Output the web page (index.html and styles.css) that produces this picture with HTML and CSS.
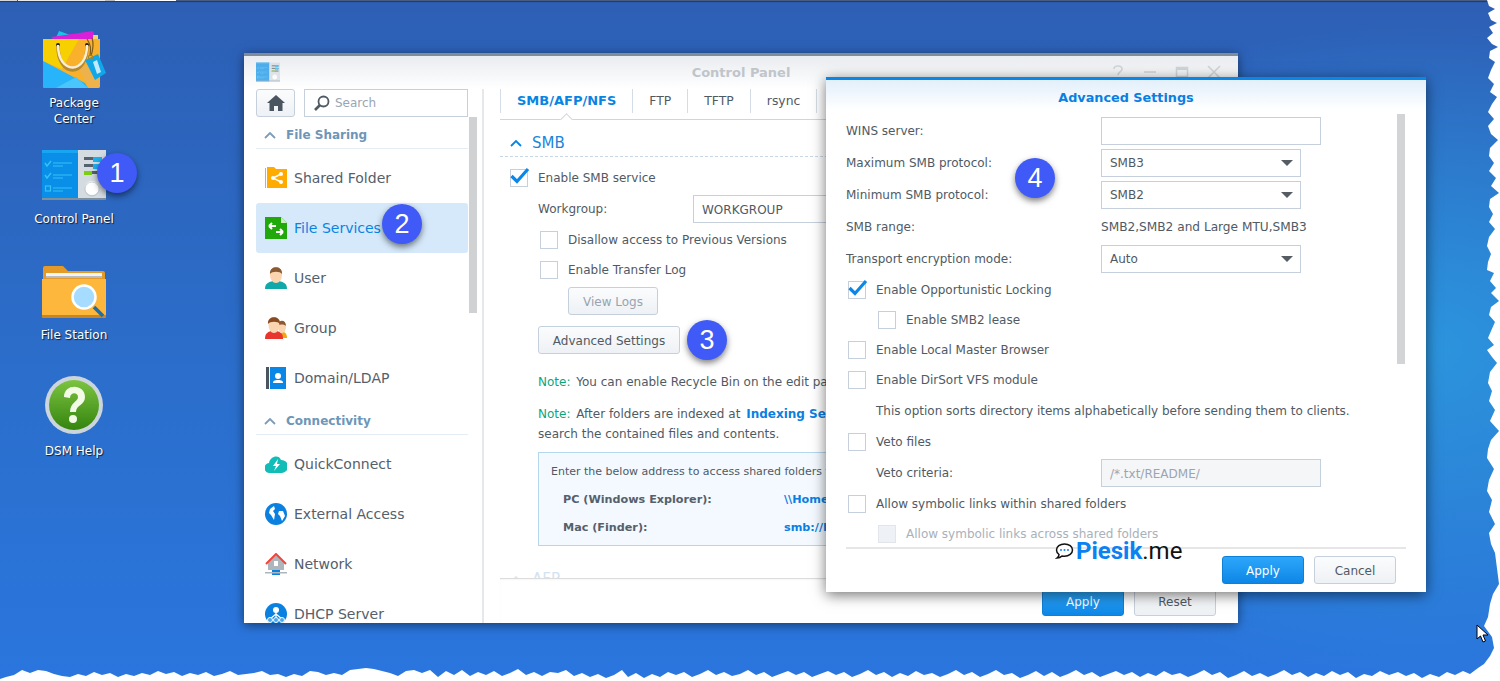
FILE: index.html
```html
<!DOCTYPE html>
<html lang="en">
<head>
<meta charset="utf-8">
<title>Control Panel - Advanced Settings</title>
<link rel="stylesheet" href="styles.css">
</head>
<body>
<svg class="defs" width="0" height="0" aria-hidden="true">
  <symbol id="cp-icon" viewBox="0 0 64 50">
    <rect width="36" height="50" fill="#0a8fe8"/>
    <rect width="36" height="3" fill="#19a5f2"/>
    <rect x="36" width="28" height="50" fill="#d4dbe1"/>
    <rect y="48" width="64" height="2" fill="#7f8f9c"/>
    <path d="M3 13l2 3 4-5M3 25l2 3 4-5" fill="none" stroke="#35c2f7" stroke-width="1.4"/>
    <rect x="3.500" y="36" width="5" height="5" fill="none" stroke="#35c2f7" stroke-width="1.2"/>
    <path d="M11 13h19M11 16h10M11 25h19M11 28h10M11 38h19M11 41h10" stroke="#35c2f7" stroke-width="1.1"/>
    <rect x="42" y="7" width="18" height="3" fill="#56636e"/><rect x="51" y="7" width="9" height="5" fill="#1db0ef"/>
    <rect x="42" y="14" width="18" height="3" fill="#56636e"/><rect x="51" y="14" width="9" height="5" fill="#1db0ef"/>
    <rect x="42" y="21" width="18" height="3" fill="#56636e"/><rect x="42" y="21" width="8" height="4" fill="#7ccf10"/>
    <circle cx="50" cy="38" r="7" fill="#fff"/><circle cx="50" cy="39" r="7" fill="none" stroke="#aab4bd" stroke-width=".6"/>
  </symbol>
  <symbol id="check" viewBox="0 0 20 18">
    <path d="M1.500 9l5.500 5.500L18 2" fill="none" stroke="#0c87e8" stroke-width="3.200"/>
  </symbol>
  <symbol id="chev" viewBox="0 0 12 8">
    <path d="M1 7l5-5 5 5" fill="none" stroke="currentColor" stroke-width="1.800"/>
  </symbol>
</svg>

<main class="desktop">
  <div class="taskbar-edge"></div>

  <div class="desk-icon pos-pkg">
    <svg width="64" height="60" viewBox="0 0 64 60">
      <path d="M13 11l4-9 14 5-14 6z" fill="#18c5e8"/>
      <path d="M9 8l42-6 3 9H12z" fill="#d91fd8"/>
      <rect x="51" y="6" width="5" height="6" fill="#f4d56a"/>
      <path d="M1 10h57v47a2 2 0 0 1-2 2H3a2 2 0 0 1-2-2z" fill="#f9b02a"/>
      <path d="M1 10h36L20 40 1 32z" fill="#f6d000"/>
      <path d="M1 32l42 22 3 5H3a2 2 0 0 1-2-2z" fill="#27b4fb"/>
      <path d="M14 59l20-11 12 11z" fill="#49c6fb"/>
      <path d="M34 36l24 0v21a2 2 0 0 1-2 2h-8z" fill="#e9b35a" opacity=".75"/>
      <circle cx="16" cy="16" r="2" fill="#222"/><circle cx="45" cy="16" r="2" fill="#222"/>
      <path d="M16 17c0 32 29 32 29 0" fill="none" stroke="#b5892f" stroke-width="3.500"/>
      <path d="M16 16c0 30 29 30 29 0" fill="none" stroke="#fbeed3" stroke-width="2.500"/>
      <path d="M45 10c4 6 4 10 3 17" fill="none" stroke="#7b5a1c" stroke-width="1.200"/>
      <path d="M50 9c2 6 1 12-1 18" fill="none" stroke="#7b5a1c" stroke-width="1.200"/>
      <path d="M43 31l13-6 8 19-11 7z" fill="#10a7e8"/>
      <path d="M51 33l4-2 4 12-4 2z" fill="#bfeaff"/>
      <circle cx="48.500" cy="28" r="2" fill="none" stroke="#a8862a" stroke-width="1.200"/>
    </svg>
    <span class="desk-label">Package<br>Center</span>
  </div>

  <div class="desk-icon pos-cp">
    <svg class="cp-big" width="64" height="50"><use href="#cp-icon"/></svg>
    <span class="desk-label">Control Panel</span>
  </div>

  <div class="desk-icon pos-fs">
    <svg width="64" height="54" viewBox="0 0 64 54">
      <path d="M1 52V3a2 2 0 0 1 2-2h18l5 5h35a2 2 0 0 1 2 2v44z" fill="#e39a26"/>
      <rect x="4" y="8" width="56" height="4" fill="#f4f4f4"/>
      <rect x="4" y="11" width="56" height="2" fill="#b9bcc0"/>
      <path d="M0 14h64v37a2 2 0 0 1-2 2H2a2 2 0 0 1-2-2z" fill="#fdb73d"/>
      <path d="M0 50h64v1a2 2 0 0 1-2 2H2a2 2 0 0 1-2-2z" fill="#c98620"/>
      <path d="M52 42l9 9" stroke="#1f6ea8" stroke-width="3.500"/>
      <circle cx="42" cy="32" r="11.500" fill="#a5dcff" stroke="#fff" stroke-width="2.500"/>
    </svg>
    <span class="desk-label">File Station</span>
  </div>

  <div class="desk-icon pos-help">
    <svg width="60" height="60" viewBox="0 0 60 60">
      <defs><linearGradient id="helpg" x1="0" y1="0" x2="0" y2="1"><stop offset="0" stop-color="#7cc441"/><stop offset="1" stop-color="#35840f"/></linearGradient></defs>
      <circle cx="30" cy="30" r="29" fill="#cdd5dc"/>
      <circle cx="30" cy="30" r="25" fill="url(#helpg)"/>
      <path d="M20 22c0-14 21-13 21 0 0 8-9 8-9 15h-6c0-10 8-10 8-15 0-5-8-5-8 1z" fill="#f2fbe6"/>
      <circle cx="29" cy="44" r="4" fill="#f2fbe6"/>
    </svg>
    <span class="desk-label">DSM Help</span>
  </div>

  <section class="window">
    <header class="win-head">
      <svg class="win-logo" width="24" height="20"><use href="#cp-icon"/></svg>
      <h1 class="win-title">Control Panel</h1>
      <div class="win-controls">
        <svg width="14" height="14" viewBox="0 0 14 14"><path d="M3 4c0-4 8-4 8 0 0 3-4 3-4 6M7 12v2" fill="none" stroke="#d0d5da" stroke-width="1.600"/></svg>
        <svg width="14" height="14" viewBox="0 0 14 14"><path d="M1 7h12" stroke="#d0d5da" stroke-width="1.600"/></svg>
        <svg width="14" height="14" viewBox="0 0 14 14"><rect x="1.500" y="2.500" width="11" height="9" fill="none" stroke="#d0d5da" stroke-width="1.500"/><path d="M1 4h12" stroke="#d0d5da" stroke-width="2"/></svg>
        <svg width="14" height="14" viewBox="0 0 14 14"><path d="M1 1l12 12M13 1L1 13" stroke="#d0d5da" stroke-width="1.600"/></svg>
      </div>
    </header>
    <div class="win-body">
      <aside class="sidebar">
        <div class="side-tools">
          <button class="btn home-btn" aria-label="Home">
            <svg width="18" height="16" viewBox="0 0 18 16"><path d="M9 0L0 8h2.500v8H7v-5h4v5h4.500V8H18z" fill="#4a5560"/></svg>
          </button>
          <div class="search">
            <svg width="17" height="17" viewBox="0 0 17 17"><circle cx="10.500" cy="6.500" r="5" fill="none" stroke="#4f5a64" stroke-width="1.800"/><path d="M7 10l-5 5" stroke="#4f5a64" stroke-width="2.600"/></svg>
            <span>Search</span>
          </div>
        </div>
        <nav class="side-nav">
          <div class="side-group"><svg class="side-chev" width="12" height="8"><use href="#chev"/></svg>File Sharing</div>
          <a class="side-item">
            <svg width="22" height="22" viewBox="0 0 22 22"><path d="M0 1h1v20H0zM2 0h7l2 2h11v19H2z" fill="#ffab00"/><path d="M16 7l-8 4 8 4" fill="none" stroke="#fff" stroke-width="1.500"/><circle cx="16" cy="7" r="2" fill="#fff"/><circle cx="8" cy="11" r="2" fill="#fff"/><circle cx="16" cy="15" r="2" fill="#fff"/></svg>
            Shared Folder
          </a>
          <a class="side-item active">
            <svg width="22" height="22" viewBox="0 0 22 22"><path d="M0 0h16l6 6v16H0z" fill="#21a80b"/><path d="M16 0l6 6h-6z" fill="#cdeec4"/><path d="M4 9h7M4 9l3-3M4 9l3 3M18 15h-7M18 15l-3-3M18 15l-3 3" fill="none" stroke="#fff" stroke-width="2"/></svg>
            File Services
          </a>
          <a class="side-item">
            <svg width="22" height="22" viewBox="0 0 22 22"><path d="M0 22c0-6 4-7 8-8h6c4 1 8 2 8 8z" fill="#10a8a8"/><ellipse cx="11" cy="8" rx="6" ry="8" fill="#fbd5b0"/><path d="M5 7c-1-9 13-9 12 0-2-3-10-3-12 0z" fill="#8a5a33"/></svg>
            User
          </a>
          <a class="side-item">
            <svg width="22" height="22" viewBox="0 0 22 22"><path d="M15 21c0-4 1-6 3-6s4 2 4 6z" fill="#f4a60c"/><ellipse cx="17" cy="10" rx="4" ry="6" fill="#fbd5b0"/><path d="M13 9c0-7 8-7 8 0-2-2-6-2-8 0z" fill="#8a5a33"/><path d="M0 22c0-6 3-7 6-8h6c3 1 6 2 6 8z" fill="#e8362e"/><ellipse cx="9" cy="8" rx="5.500" ry="8" fill="#fbd5b0"/><path d="M3 7c-1-9 13-9 12 0-2-3-10-3-12 0z" fill="#8a4a22"/></svg>
            Group
          </a>
          <a class="side-item">
            <svg width="22" height="22" viewBox="0 0 22 22"><rect x="1" width="3" height="22" fill="#4a5560"/><rect x="5" width="16" height="22" fill="#0a86e6"/><circle cx="13" cy="9" r="3" fill="#fff"/><path d="M8 16c0-3 3-3 5-3s5 0 5 3z" fill="#fff"/></svg>
            Domain/LDAP
          </a>
          <div class="side-group"><svg class="side-chev" width="12" height="8"><use href="#chev"/></svg>Connectivity</div>
          <a class="side-item">
            <svg width="22" height="22" viewBox="0 0 22 22"><path d="M5 20a5 5 0 0 1-1-10C5 3 14 1 16 7a6.500 6.500 0 0 1 1 13z" fill="#12bdb8"/><path d="M13 6l-5 7h3l-2 5 6-7h-3z" fill="#fff"/></svg>
            QuickConnect
          </a>
          <a class="side-item">
            <svg width="22" height="22" viewBox="0 0 22 22"><circle cx="11" cy="11" r="11" fill="#0a80e0"/><path d="M5 6l4-3 1 3-2 2 2 3-1 6-3-5-2-2zM14 8l4 0 2 5-3 5-2-5-2-2z" fill="#fff"/></svg>
            External Access
          </a>
          <a class="side-item">
            <svg width="22" height="22" viewBox="0 0 22 22"><path d="M11 2L3 10v7h16v-7z" fill="#aeb6bd"/><path d="M1 11l10-10 10 10" fill="none" stroke="#f04438" stroke-width="2"/><rect x="9" y="8" width="4" height="5" fill="#fff"/><rect x="7" y="17" width="8" height="5" fill="#0a80e0"/><rect y="19" width="22" height="1.500" fill="#aeb6bd"/></svg>
            Network
          </a>
          <a class="side-item">
            <svg width="22" height="22" viewBox="0 0 22 22"><circle cx="11" cy="11" r="11" fill="#0a80e0"/><circle cx="11" cy="7" r="3" fill="#fff"/><path d="M11 9v6M11 11l-6 5M11 11l6 5" stroke="#fff" stroke-width="1.200"/><circle cx="5" cy="17" r="2.500" fill="#4aa7ee" stroke="#fff"/><circle cx="11" cy="17" r="2.500" fill="#4aa7ee" stroke="#fff"/><circle cx="17" cy="17" r="2.500" fill="#4aa7ee" stroke="#fff"/></svg>
            DHCP Server
          </a>
        </nav>
        <div class="side-scroll"></div>
      </aside>

      <div class="main-pane">
        <div class="tabs">
          <span class="tab active">SMB/AFP/NFS</span>
          <span class="tab">FTP</span>
          <span class="tab">TFTP</span>
          <span class="tab">rsync</span>
          <span class="tab">Advanced</span>
        </div>
        <div class="main-scroll">
          <h2 class="sec-head"><svg class="sec-chev" width="12" height="8"><use href="#chev"/></svg>SMB</h2>
          <div class="chk-row main-l0"><span class="chk"><svg class="tick" width="20" height="18"><use href="#check"/></svg></span>Enable SMB service</div>
          <div class="field-row"><label class="field-label">Workgroup:</label><div class="input wide">WORKGROUP</div></div>
          <div class="chk-row main-l1"><span class="chk"></span>Disallow access to Previous Versions</div>
          <div class="chk-row main-l1"><span class="chk"></span>Enable Transfer Log</div>
          <button class="btn btn-logs">View Logs</button>
          <button class="btn btn-adv">Advanced Settings</button>
          <p class="note note-1"><span class="note-tag">Note:</span> You can enable Recycle Bin on the edit page</p>
          <p class="note note-2"><span class="note-tag">Note:</span> After folders are indexed at <b class="link">Indexing Service</b><br>search the contained files and contents.</p>
          <div class="info-box">
            <p class="info-lead">Enter the below address to access shared folders from</p>
            <div class="info-row"><b class="info-key">PC (Windows Explorer):</b><b class="link">\\HomeNAS</b></div>
            <div class="info-row"><b class="info-key">Mac (Finder):</b><b class="link">smb://HomeNAS</b></div>
          </div>
          <h2 class="sec-head sec-faded"><svg class="sec-chev" width="12" height="8"><use href="#chev"/></svg>AFP</h2>
        </div>
        <footer class="main-foot">
          <button class="btn btn-primary">Apply</button>
          <button class="btn">Reset</button>
        </footer>
      </div>
    </div>
  </section>

  <section class="dialog">
    <header class="dlg-head">Advanced Settings</header>
    <div class="dlg-body">
      <div class="dlg-row"><label class="dlg-label">WINS server:</label><div class="input w220"></div></div>
      <div class="dlg-row"><label class="dlg-label">Maximum SMB protocol:</label><div class="input select w200">SMB3<i class="caret"></i></div></div>
      <div class="dlg-row"><label class="dlg-label">Minimum SMB protocol:</label><div class="input select w200">SMB2<i class="caret"></i></div></div>
      <div class="dlg-row"><label class="dlg-label">SMB range:</label><span class="range">SMB2,SMB2 and Large MTU,SMB3</span></div>
      <div class="dlg-row"><label class="dlg-label">Transport encryption mode:</label><div class="input select w200">Auto<i class="caret"></i></div></div>
      <div class="chk-row dlg-l0 first-check"><span class="chk"><svg class="tick" width="20" height="18"><use href="#check"/></svg></span>Enable Opportunistic Locking</div>
      <div class="chk-row dlg-l1"><span class="chk"></span>Enable SMB2 lease</div>
      <div class="chk-row dlg-l0"><span class="chk"></span>Enable Local Master Browser</div>
      <div class="chk-row dlg-l0"><span class="chk"></span>Enable DirSort VFS module</div>
      <div class="dlg-text">This option sorts directory items alphabetically before sending them to clients.</div>
      <div class="chk-row dlg-l0 tall"><span class="chk"></span>Veto files</div>
      <div class="dlg-row veto"><label class="dlg-label veto-label">Veto criteria:</label><div class="input w220 disabled">/*.txt/README/</div></div>
      <div class="chk-row dlg-l0"><span class="chk"></span>Allow symbolic links within shared folders</div>
      <div class="chk-row dlg-l1 off"><span class="chk"></span>Allow symbolic links across shared folders</div>
      <div class="dlg-scroll"></div>
    </div>
    <footer class="dlg-foot">
      <button class="btn btn-primary">Apply</button>
      <button class="btn">Cancel</button>
    </footer>
  </section>

  <div class="badge b1">1</div>
  <div class="badge b2">2</div>
  <div class="badge b3">3</div>
  <div class="badge b4">4</div>

  <div class="mark">
    <svg width="19" height="18" viewBox="0 0 19 18"><path d="M9.500 2C5 2 1.500 4.500 1.500 8c0 2 1 3.500 2.500 4.500 0 1.500-.5 2.500-2 3.500 2.500 0 4-1 5-2 .8.200 1.700.200 2.500.200 4.500 0 8-2.700 8-6.200S14 2 9.500 2z" fill="#fff" stroke="#111" stroke-width="1.500"/><circle cx="6" cy="8" r="1" fill="#1a7ff0"/><circle cx="9.500" cy="8" r="1" fill="#1a7ff0"/><circle cx="13" cy="8" r="1" fill="#1a7ff0"/></svg>
    <span class="mark-name">Piesik</span><span class="mark-tld">.me</span>
  </div>

  <svg class="torn" width="1500" height="681" viewBox="0 0 1500 681" aria-hidden="true">
    <path fill="#fff" d="M1487 0L1489 6L1495 9L1488 13L1491 20L1497 23L1489 27L1493 33L1487 38L1492 44L1498 47L1490 51L1489 58L1495 62L1491 70L1488 78L1494 84L1490 92L1497 97L1492 104L1488 112L1494 119L1488 126L1491 134L1498 140L1490 148L1489 156L1494 163L1489 171L1496 178L1491 186L1499 193L1490 199L1489 207L1493 214L1489 222L1495 229L1489 237L1487 246L1491 254L1488 262L1487 270L1494 273L1490 281L1496 288L1491 293L1499 301L1491 307L1489 315L1495 322L1491 331L1488 338L1494 345L1487 350L1492 357L1497 363L1490 372L1488 383L1492 391L1489 401L1495 410L1490 421L1499 431L1491 440L1488 449L1487 458L1494 469L1489 480L1487 491L1492 500L1489 512L1495 524L1489 533L1491 544L1495 553L1499 584L1493 594L1490 604L1488 617L1484 626L1492 637L1494 648L1490 656L1484 664L1478 668L1470 674L1463 671L1455 675L1447 672L1439 677L1430 674L1422 678L1414 673L1406 676L1398 672L1389 675L1380 671L1372 676L1364 674L1356 678L1348 672L1340 675L1332 671L1324 676L1316 673L1308 677L1300 672L1292 675L1284 670L1276 674L1268 677L1260 673L1252 676L1244 671L1236 675L1228 678L1220 672L1212 675L1204 670L1196 674L1188 677L1180 673L1172 675L1164 671L1156 676L1148 673L1140 677L1132 672L1124 675L1116 671L1108 674L1100 677L1092 672L1084 675L1076 670L1068 674L1060 677L1052 672L1044 676L1036 671L1028 675L1020 678L1012 673L1004 675L996 670L988 674L980 677L972 672L964 675L956 670L948 674L940 677L932 673L924 675L916 671L908 676L900 673L892 677L884 672L876 675L868 670L860 674L852 677L844 672L836 675L828 671L820 674L812 677L804 672L796 675L788 671L780 674L772 677L764 672L756 675L748 670L740 674L732 676L724 672L716 675L708 670L700 674L692 677L684 672L676 675L668 672L660 677L652 674L644 678L636 673L628 677L622 670L614 675L606 678L598 674L590 677L582 673L574 676L566 670L558 673L550 672L542 676L534 672L526 675L518 669L510 673L502 676L494 671L486 675L478 672L470 676L462 670L454 675L446 671L438 677L430 670L422 673L414 670L406 671L398 676L390 673L382 671L374 669L366 668L358 669L350 670L342 675L334 673L326 675L318 672L310 671L302 676L294 674L286 677L278 674L270 675L262 671L254 673L246 674L238 675L230 671L222 674L214 676L206 672L198 675L190 673L182 676L174 672L166 674L158 671L150 675L142 673L134 676L126 674L118 677L110 673L102 675L94 672L86 676L78 674L70 677L62 676L54 674L46 671L38 670L30 673L22 670L14 675L6 677L0 679V681H1500V0Z"/>
  </svg>

  <svg class="cursor" width="13" height="19" viewBox="0 0 13 19"><path d="M1 1v14l3.500-3 2.500 6 2.500-1-2.500-6H12z" fill="#fff" stroke="#000" stroke-width="1"/></svg>
</main>
</body>
</html>
```
FILE: styles.css
```css
* { box-sizing: border-box; }
html, body { margin: 0; height: 100%; }
body { overflow: hidden; background: #fff; font-family: "DejaVu Sans", Verdana, sans-serif; font-size: 12px; color: #505a64; }
.defs { position: absolute; }

.desktop {
  position: relative;
  width: 1500px;
  height: 681px;
  overflow: hidden;
  background:
    radial-gradient(ellipse 480px 330px at 1420px 350px, #2c95de 0%, rgba(44,149,222,0) 100%),
    linear-gradient(180deg, #2d5fb5 0%, #2b6ecb 55%, #2a76de 100%);
}
.taskbar-edge {
  position: absolute; left: 0; right: 0; top: 0; height: 1px;
  background: linear-gradient(90deg, #d6d6d6 0 17px, #555 17px 18px, #e8e8e8 18px 105px, #bbb 105px 115px, #fff 115px 176px, #4a5d80 176px);
  box-shadow: 0 1px 1px rgba(20,40,90,.8);
}

.desk-icon { position: absolute; left: 24px; width: 100px; display: flex; flex-direction: column; align-items: center; }
.desk-label { margin-top: 6px; color: #fff; font-size: 12px; line-height: 16px; text-align: center; text-shadow: 1px 1px 1px rgba(0,0,0,.75); white-space: nowrap; }
.pos-pkg { top: 29px; }
.pos-cp { top: 150px; }
.pos-cp .desk-label { margin-top: 11px; }
.pos-fs { top: 265px; }
.pos-fs .desk-label { margin-top: 8px; }
.pos-help { top: 375px; }
.pos-help .desk-label { margin-top: 8px; }

.btn {
  display: inline-flex; align-items: center; justify-content: center;
  width: 82px; height: 28px; padding: 0; margin: 0;
  border: 1px solid #c6d0dc; border-radius: 3px;
  background: linear-gradient(180deg, #fbfcfd, #eef1f5);
  color: #505a64; font: 12px "DejaVu Sans", Verdana, sans-serif;
}
.btn-primary { border-color: #0d80d8; background: linear-gradient(180deg, #2ca7fb, #0e86e6); color: #fff; }

.window {
  position: absolute; left: 244px; top: 53px; width: 994px; height: 570px;
  display: flex; flex-direction: column;
  background: #fff; border-top: 3px solid #7f8c9a; overflow: hidden;
  box-shadow: 0 2px 10px rgba(0,0,0,.5);
}
.win-head {
  position: relative; flex: none; height: 33px; display: flex; align-items: center; justify-content: center;
  background: linear-gradient(180deg, #e9ecf0, #fff);
}
.win-logo { position: absolute; left: 12px; top: 6px; opacity: .7; }
.win-title { margin: 0; font-size: 13px; font-weight: bold; color: #bfc5cb; }
.win-controls { position: absolute; right: 17px; top: 9px; display: flex; gap: 18px; }
.win-body { flex: 1; min-height: 0; display: flex; }

.sidebar { position: relative; flex: none; width: 240px; padding-left: 12px; border-right: 2px solid #e6e8ea; display: flex; flex-direction: column; }
.side-tools { flex: none; display: flex; gap: 9px; height: 28px; width: 212px; }
.home-btn { flex: none; width: 39px; height: 28px; }
.search { flex: 1; display: flex; align-items: center; gap: 5px; padding-left: 8px; height: 28px; border: 1px solid #c6d0dc; color: #9aa5b2; font-size: 12px; }
.side-nav { flex: 1; width: 212px; overflow: hidden; }
.side-group {
  display: flex; align-items: center; gap: 10px; height: 32px; padding: 5px 0 0 8px; margin-bottom: 4px;
  border-bottom: 1px solid #e5edf4; color: #6d96b8; font-weight: bold; font-size: 12px;
}
.side-chev { color: #7c9cba; }
.side-item { display: flex; align-items: center; gap: 7px; height: 50px; padding-left: 9px; border-radius: 3px; font-size: 14px; color: #55606b; }
.side-item.active { background: #d5e9fb; color: #0a84e2; }
.side-scroll { position: absolute; left: 225px; top: 28px; width: 8px; height: 196px; background: #d0d1d2; }

.main-pane { flex: 1; min-width: 0; display: flex; flex-direction: column; padding-left: 16px; }
.tabs { flex: none; display: flex; height: 31px; border-bottom: 1px solid #cfd5db; position: relative; }
.tab { display: flex; align-items: center; height: 24px; padding: 0 16px 2px; border-right: 1px solid #d4dde6; font-size: 12.400px; color: #505a64; white-space: nowrap; }
.tab.active { color: #0a84e2; font-weight: bold; border-left: 1px solid #d4dde6; position: relative; font-size: 13px; }
.tab.active::after {
  content: ""; position: absolute; left: 61px; top: 26px; width: 8px; height: 8px;
  background: #fff; border-left: 1px solid #cfd5db; border-top: 1px solid #cfd5db;
  transform: rotate(45deg);
}
.main-scroll { flex: 1; min-height: 0; overflow: hidden; }
.sec-head {
  display: flex; align-items: center; gap: 10px; height: 37px; margin: 0; padding: 10px 0 0 10px;
  border-bottom: 1px dashed #c8d7e6; color: #1a86dc; font-size: 15px; font-weight: normal;
}
.sec-chev { color: #0a84e2; }
.sec-faded { margin-top: 24px; height: 20px; padding-top: 0; border: 0; color: #d4e3f2; align-items: flex-start; }
.sec-faded .sec-chev { color: #dce8f4; margin-top: 5px; }

.chk-row { display: flex; align-items: center; height: 30px; white-space: nowrap; }
.chk { position: relative; flex: none; width: 18px; height: 18px; margin-right: 10px; border: 1px solid #c6d0dc; background: #fff; }
.tick { position: absolute; left: -1px; top: -3px; }
.main-l0 { margin-top: 6px; padding-left: 10px; }
.main-l1 { padding-left: 40px; }
.field-row { display: flex; align-items: center; height: 32px; padding-left: 38px; }
.field-label { width: 155px; flex: none; }
.input { display: flex; align-items: center; height: 28px; padding: 1px 0 0 8px; border: 1px solid #c6d0dc; background: #fff; white-space: nowrap; flex: none; }
.wide { width: 400px; }
.btn-logs { display: flex; width: 90px; margin: 2px 0 0 68px; padding-top: 2px; color: #98a3b0; }
.btn-adv { display: flex; width: 142px; margin: 11px 0 0 38px; padding-top: 2px; }
.note { margin: 0 0 0 38px; line-height: 20px; white-space: nowrap; }
.note-1 { margin-top: 18px; }
.note-2 { margin-top: 12px; }
.note-tag { color: #0aa77e; margin-right: 2px; }
.link { color: #0a7fe2; }
.note .link { margin-left: 2px; }
.info-box { width: 420px; height: 94px; margin: 8px 0 0 38px; padding: 12px 0 0 12px; border: 1px solid #b5d6ec; background: #f3f9fe; font-size: 11px; white-space: nowrap; overflow: hidden; }
.info-lead { margin: 0 0 15px; line-height: 13px; }
.info-row { display: flex; height: 28px; padding-left: 12px; font-size: 11.200px; line-height: 13px; }
.info-key { width: 221px; flex: none; color: #55606b; }

.main-foot { flex: none; height: 45px; display: flex; justify-content: flex-end; gap: 10px; padding: 11px 22px 0 0; border-top: 1px solid #dcdcdc; box-shadow: inset 0 1px 2px rgba(0,0,0,.04); }
.main-foot .btn { height: 26px; padding-bottom: 2px; }

.dialog {
  position: absolute; left: 826px; top: 77px; width: 600px; height: 515px;
  display: flex; flex-direction: column;
  background: #fff; border-top: 3px solid #0a86e6; overflow: hidden;
  box-shadow: 0 3px 13px rgba(0,0,0,.55);
}
.dlg-head {
  flex: none; height: 30px; padding-top: 10px; text-align: center;
  background: linear-gradient(180deg, #e2effa, #fff);
  color: #0a7fe2; font-size: 12.800px; font-weight: bold; line-height: 16px;
}
.dlg-body { position: relative; flex: 1; min-height: 0; overflow: hidden; padding: 7px 0 0 20px; }
.dlg-row { display: flex; align-items: center; height: 28px; margin-bottom: 4px; white-space: nowrap; }
.dlg-label { flex: none; width: 255px; }
.range { font-size: 12.150px; }
.w220 { width: 220px; }
.w200 { width: 200px; }
.select { justify-content: space-between; padding: 0 7px 0 8px; }
.caret { width: 0; height: 0; border-left: 6px solid transparent; border-right: 6px solid transparent; border-top: 6px solid #555c64; }
.dlg-l0 { padding-left: 2px; }
.dlg-l1 { padding-left: 32px; }
.first-check { margin-top: -2px; }
.dlg-text { height: 31px; line-height: 33px; padding-left: 30px; white-space: nowrap; }
.tall { height: 31px; }
.veto { margin: 2px 0 2px; }
.veto-label { padding-left: 30px; }
.disabled { background: #f5f6f8; color: #9aa5b2; }
.off { color: #a9b1ba; }
.off .chk { background: #eef1f5; border-color: #e2e6ea; }
.dlg-scroll { position: absolute; left: 571px; top: 4px; width: 8px; height: 250px; background: #d3d4d5; }
.dlg-foot { flex: none; margin: 0 20px; height: 45px; padding: 7px 10px 0 0; display: flex; justify-content: flex-end; gap: 10px; border-top: 2px solid #e6e6e6; }
.dlg-foot .btn { padding-top: 2px; }

.badge {
  position: absolute; width: 40px; height: 40px; border-radius: 50%;
  display: flex; align-items: center; justify-content: center;
  background: #3f5af6; color: #fff; font: 27px/1 "Liberation Sans", Arial, sans-serif;
  box-shadow: 0 3px 6px rgba(0,0,0,.5);
}
.b1 { left: 97px; top: 153px; }
.b2 { left: 382px; top: 204px; }
.b3 { left: 687px; top: 320px; }
.b4 { left: 1015px; top: 158px; }

.mark { position: absolute; left: 1055px; top: 541px; height: 20px; display: flex; align-items: center; font-family: Roboto, sans-serif; font-size: 24px; line-height: 20px; }
.mark-name { margin-left: 2px; color: #0b82f2; font-weight: bold; }
.mark-tld { color: #111; }

.torn { position: absolute; left: 0; top: 0; pointer-events: none; }
.cursor { position: absolute; left: 1476px; top: 624px; }
```
